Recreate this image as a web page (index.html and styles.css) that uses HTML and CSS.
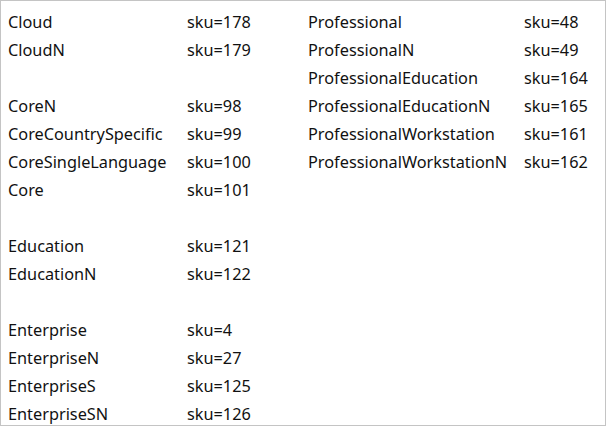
FILE: index.html
```html
<!DOCTYPE html>
<html>
<head>
<meta charset="utf-8">
<link rel="stylesheet" href="styles.css">
</head>
<body>
<div class="frame">
  <div class="block left">
    <span>Cloud</span><span>sku=178</span>
    <span>CloudN</span><span>sku=179</span>
    <span class="gap"></span><span class="gap"></span>
    <span>CoreN</span><span>sku=98</span>
    <span>CoreCountrySpecific</span><span>sku=99</span>
    <span>CoreSingleLanguage</span><span>sku=100</span>
    <span>Core</span><span>sku=101</span>
    <span class="gap"></span><span class="gap"></span>
    <span>Education</span><span>sku=121</span>
    <span>EducationN</span><span>sku=122</span>
    <span class="gap"></span><span class="gap"></span>
    <span>Enterprise</span><span>sku=4</span>
    <span>EnterpriseN</span><span>sku=27</span>
    <span>EnterpriseS</span><span>sku=125</span>
    <span>EnterpriseSN</span><span>sku=126</span>
  </div>
  <div class="block right">
    <span>Professional</span><span>sku=48</span>
    <span>ProfessionalN</span><span>sku=49</span>
    <span>ProfessionalEducation</span><span>sku=164</span>
    <span>ProfessionalEducationN</span><span>sku=165</span>
    <span>ProfessionalWorkstation</span><span>sku=161</span>
    <span>ProfessionalWorkstationN</span><span>sku=162</span>
  </div>
</div>
</body>
</html>
```
FILE: styles.css
```css
html, body {
  margin: 0;
  padding: 0;
  background: #fff;
}
.frame {
  box-sizing: border-box;
  width: 606px;
  height: 426px;
  border: 1px solid #c4c4c4;
  padding: 7px 0 0 7px;
  display: flex;
  align-items: flex-start;
  overflow: hidden;
  font-family: "Noto Sans", "Open Sans", sans-serif;
  font-size: 16.3px;
  color: #111;
}
.block {
  display: grid;
  grid-auto-rows: 28px;
  line-height: 28px;
  white-space: nowrap;
}
.left {
  width: 300px;
  grid-template-columns: 179px auto;
}
.right {
  grid-template-columns: 216px auto;
}
```
